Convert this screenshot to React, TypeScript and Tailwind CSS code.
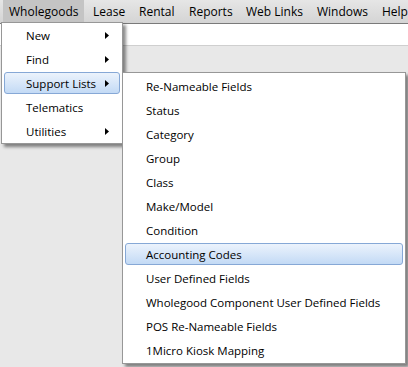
import React from 'react';

const topItems = [
  { label: 'Wholegoods', w: 'w-[81px]', active: true },
  { label: 'Lease', w: 'w-[46px]' },
  { label: 'Rental', w: 'w-[50px]' },
  { label: 'Reports', w: 'w-[57px]' },
  { label: 'Web Links', w: 'w-[71px]' },
  { label: 'Windows', w: 'w-[65px]' },
  { label: 'Help', w: 'w-[40px]' },
];

const mainItems = [
  { label: 'New', sub: true },
  { label: 'Find', sub: true },
  { label: 'Support Lists', sub: true, active: true },
  { label: 'Telematics' },
  { label: 'Utilities', sub: true },
];

const supportItems = [
  'Re-Nameable Fields',
  'Status',
  'Category',
  'Group',
  'Class',
  'Make/Model',
  'Condition',
  'Accounting Codes',
  'User Defined Fields',
  'Wholegood Component User Defined Fields',
  'POS Re-Nameable Fields',
  '1Micro Kiosk Mapping',
];

const Arrow = () => (
  <svg width="4" height="7" viewBox="0 0 4 7" className="block">
    <path d="M0 0 L4 3.5 L0 7 Z" fill="#000" />
  </svg>
);

const Row = ({ label, active, children }: { label: string; active?: boolean; children?: React.ReactNode }) => (
  <div className="h-[24px] px-[2px] py-[1px]">
    <div
      className={
        'h-[22px] flex items-center pt-[1px] rounded-[3px] border ' +
        (active
          ? 'border-[#86a8d6] bg-gradient-to-b from-[#ecf3fc] to-[#c3daf5]'
          : 'border-transparent')
      }
    >
      {children ?? <span className="pl-[20px]">{label}</span>}
    </div>
  </div>
);

export default function App() {
  return (
    <div
      className="relative w-[408px] h-[367px] overflow-hidden bg-[#e8e8e8] text-[11.5px] leading-[16px] text-black"
      style={{ fontFamily: '"Open Sans", "Liberation Sans", sans-serif' }}
    >
      {/* menu bar */}
      <div className="h-[24px] flex pl-[3px] bg-gradient-to-b from-[#e6e6e6] to-[#d4d4d4] border-b border-[#7a7a7a] text-[12px]">
        {topItems.map((t) => (
          <div
            key={t.label}
            className={
              'h-[23px] shrink-0 flex items-center pl-[6px] whitespace-nowrap ' +
              t.w +
              (t.active ? ' bg-[#c4c4c4] mr-[3px]' : '')
            }
          >
            {t.label}
          </div>
        ))}
      </div>
      {/* toolbar strip */}
      <div className="h-[22px] bg-white border-b border-[#cfcfcf]" />

      {/* first dropdown */}
      <div className="absolute left-[1px] top-[22px] w-[122px] bg-white border border-[#979797] shadow-[3px_3px_3px_rgba(0,0,0,0.45)]">
        {mainItems.map((m) => (
          <Row key={m.label} label={m.label} active={m.active}>
            <span className="pl-[21px] flex-1">{m.label}</span>
            {m.sub && (
              <span className="pr-[10px]">
                <Arrow />
              </span>
            )}
          </Row>
        ))}
      </div>

      {/* support lists submenu */}
      <div className="absolute left-[122px] top-[72px] w-[284px] py-[1px] bg-white border border-[#979797] shadow-[3px_3px_3px_rgba(0,0,0,0.45)]">
        {supportItems.map((s) => (
          <Row key={s} label={s} active={s === 'Accounting Codes'} />
        ))}
      </div>
    </div>
  );
}
